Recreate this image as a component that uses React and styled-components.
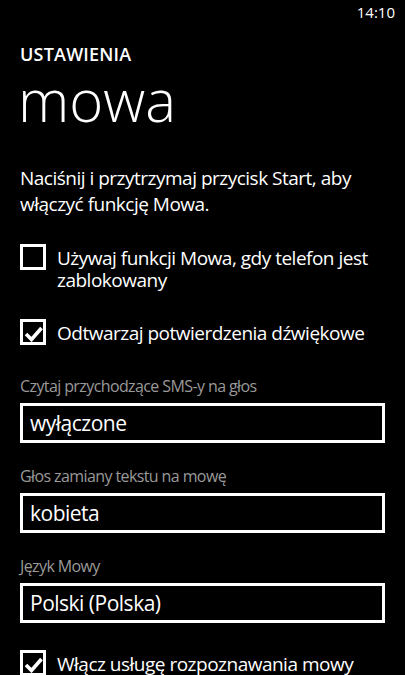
import React from "react";
import styled, { createGlobalStyle } from "styled-components";

const GlobalStyle = createGlobalStyle`
  html, body { margin: 0; padding: 0; background: #000; }
  * { box-sizing: border-box; }
`;

const Screen = styled.div`
  width: 405px;
  height: 675px;
  overflow: hidden;
  background: #000;
  color: #fff;
  font-family: "Open Sans", "Noto Sans", sans-serif;
`;

const StatusBar = styled.div`
  display: flex;
  justify-content: flex-end;
  padding: 2px 10px 0 0;
  height: 22px;
  font-size: 15px;
  line-height: 20px;
`;

const Content = styled.div`
  display: flex;
  flex-direction: column;
  padding: 0 20px 0 20px;
`;

const AppTitle = styled.div`
  margin-top: 20px;
  font-size: 18px;
  font-weight: 600;
  line-height: 24px;
  letter-spacing: 0.2px;
`;

const PageTitle = styled.h1`
  margin: 0 0 0 -2px;
  font-size: 58px;
  font-weight: 300;
  line-height: 68px;
`;

const Description = styled.p`
  margin: 31px 0 0 0;
  font-size: 19px;
  line-height: 26px;
  letter-spacing: -0.5px;
`;

const CheckRow = styled.label`
  display: flex;
  align-items: flex-start;
  gap: 11px;
  margin-top: ${(p) => p.$gap}px;
`;

const Box = styled.span`
  flex: none;
  width: 26px;
  height: 26px;
  border: 3px solid #fff;
  display: flex;
  align-items: center;
  justify-content: center;
`;

const CheckText = styled.span`
  margin-top: 3px;
  font-size: 19px;
  line-height: 22px;
  letter-spacing: -0.5px;
`;

const Field = styled.div`
  display: flex;
  flex-direction: column;
  margin-top: ${(p) => p.$gap}px;
`;

const FieldLabel = styled.div`
  font-size: 16px;
  line-height: 22px;
  letter-spacing: -0.6px;
  color: #999;
`;

const Picker = styled.div`
  margin-top: 6px;
  height: 40px;
  border: 3px solid #fff;
  padding: 0 0 0 7px;
  font-size: 21px;
  line-height: 34px;
  letter-spacing: -0.5px;
`;

function Checkbox({ checked, gap, children }) {
  return (
    <CheckRow $gap={gap}>
      <Box>
        {checked && (
          <svg width="20" height="20" viewBox="0 0 20 20">
            <polyline
              points="3,12 8.5,17.5 18.5,6"
              fill="none"
              stroke="#fff"
              strokeWidth="3.6"
              strokeLinecap="butt"
              strokeLinejoin="miter"
            />
          </svg>
        )}
      </Box>
      <CheckText>{children}</CheckText>
    </CheckRow>
  );
}

export default function App() {
  return (
    <>
      <GlobalStyle />
      <Screen>
        <StatusBar>14:10</StatusBar>
        <Content>
          <AppTitle>USTAWIENIA</AppTitle>
          <PageTitle>mowa</PageTitle>
          <Description>
            Naciśnij i przytrzymaj przycisk Start, aby włączyć funkcję Mowa.
          </Description>
          <Checkbox gap={27}>Używaj funkcji Mowa, gdy telefon jest zablokowany</Checkbox>
          <Checkbox gap={28} checked>
            Odtwarzaj potwierdzenia dźwiękowe
          </Checkbox>
          <Field $gap={30}>
            <FieldLabel>Czytaj przychodzące SMS-y na głos</FieldLabel>
            <Picker>wyłączone</Picker>
          </Field>
          <Field $gap={22}>
            <FieldLabel>Głos zamiany tekstu na mowę</FieldLabel>
            <Picker>kobieta</Picker>
          </Field>
          <Field $gap={22}>
            <FieldLabel>Język Mowy</FieldLabel>
            <Picker>Polski (Polska)</Picker>
          </Field>
          <Checkbox gap={27} checked>
            Włącz usługę rozpoznawania mowy
          </Checkbox>
        </Content>
      </Screen>
    </>
  );
}
